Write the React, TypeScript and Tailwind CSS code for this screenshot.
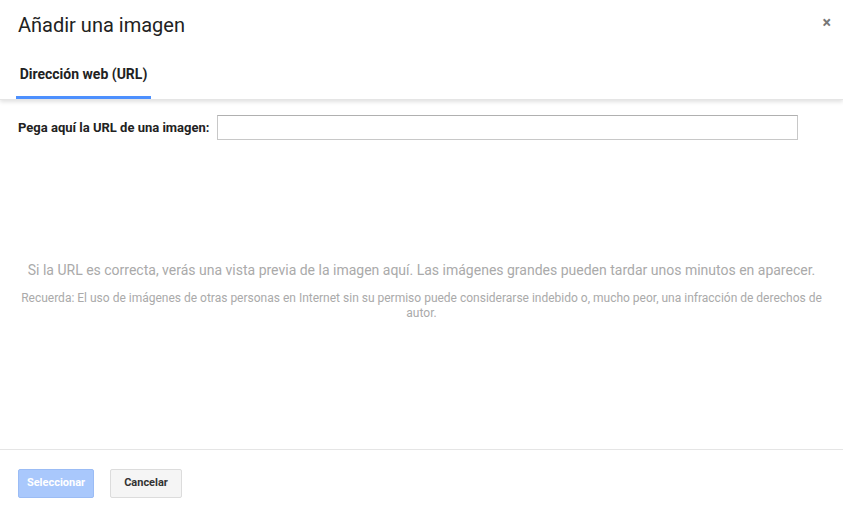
import React from "react";

export default function App() {
  return (
    <div className="w-[843px] h-[509px] bg-white flex flex-col overflow-hidden" style={{ fontFamily: "Roboto, Arial, sans-serif" }}>
      <div className="relative z-10 shadow-[0_2px_4px_rgba(0,0,0,0.12)] border-b border-[#e5e5e5]">
        <div className="h-[52px] flex items-center pl-[18px] pr-[12px] justify-between">
          <div className="text-[20px] text-[#222] leading-none -mt-[3px]">Añadir una imagen</div>
          <div className="text-[#777] text-[16px] font-bold leading-none -mt-[6px]">×</div>
        </div>
        <div className="h-[47px] flex items-end pl-[16px]">
          <div className="w-[135px] h-full flex items-center justify-center border-b-[3px] border-[#4d90fe] text-[14px] font-bold text-[#222] pt-[1px]">
            Dirección web (URL)
          </div>
        </div>
      </div>
      <div className="flex-1 flex flex-col">
        <div className="flex items-center pl-[18px] pt-[15px]">
          <label className="text-[13px] font-bold text-[#222] mr-[8px]">Pega aquí la URL de una imagen:</label>
          <input className="w-[581px] h-[25px] border border-[#c8c8c8] border-t-[#b0b0b0] outline-none" />
        </div>
        <div className="flex-1 flex flex-col items-center justify-center text-center px-[20px] pb-[8px]">
          <div className="text-[14px] text-[#aaa] mb-[10px]">
            Si la URL es correcta, verás una vista previa de la imagen aquí. Las imágenes grandes pueden tardar unos minutos en aparecer.
          </div>
          <div className="text-[12px] text-[#aaa] leading-[15px]">
            Recuerda: El uso de imágenes de otras personas en Internet sin su permiso puede considerarse indebido o, mucho peor, una infracción de derechos de autor.
          </div>
        </div>
      </div>
      <div className="h-[60px] border-t border-[#e5e5e5] flex items-center pl-[18px] gap-[16px] pt-[8px]">
        <button className="h-[29px] w-[76px] rounded-[2px] bg-[#a9c8fc] border border-[#9bbcf5] text-white text-[11px] font-bold">Seleccionar</button>
        <button className="h-[29px] w-[72px] rounded-[2px] bg-[#f5f5f5] border border-[#dcdcdc] text-[#333] text-[11px] font-bold">Cancelar</button>
      </div>
    </div>
  );
}
